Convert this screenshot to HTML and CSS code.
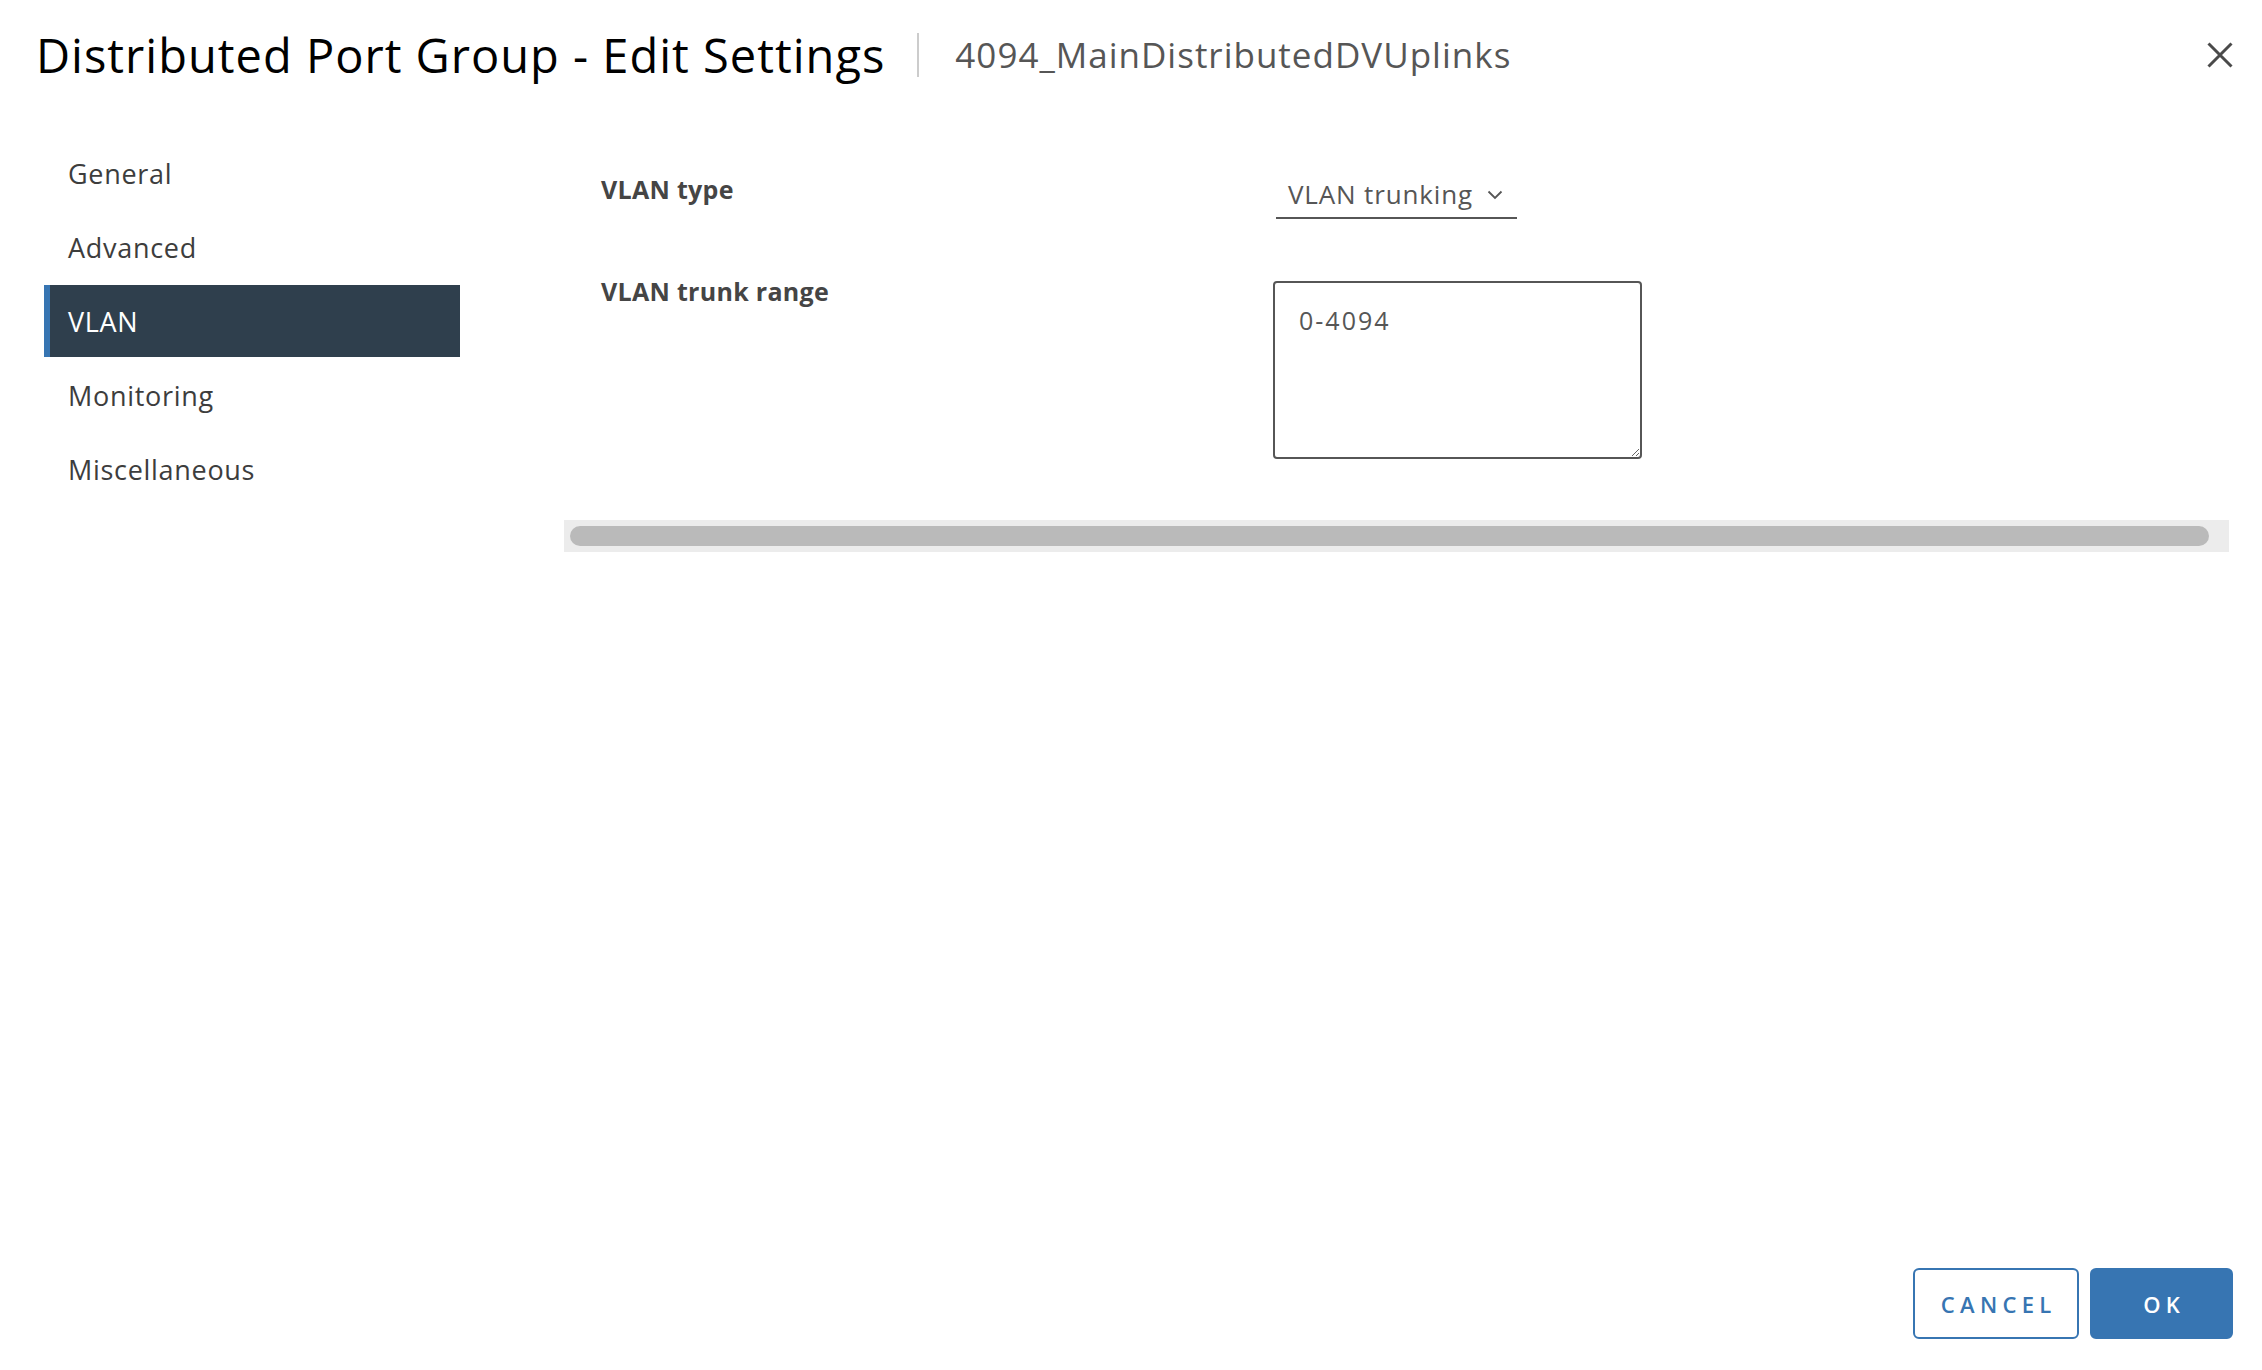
FILE: index.html
```html
<!DOCTYPE html>
<html lang="en">
<head>
<meta charset="utf-8">
<title>Distributed Port Group - Edit Settings</title>
<link rel="stylesheet" href="styles.css">
</head>
<body>
<div class="modal">
  <header class="header">
    <h1 class="title">Distributed Port Group - Edit Settings</h1>
    <span class="divider"></span>
    <span class="subtitle">4094_MainDistributedDVUplinks</span>
    <button class="close" aria-label="Close">
      <svg width="26" height="26" viewBox="0 0 26 26"><path d="M1.5 1.5 L24.5 24.5 M24.5 1.5 L1.5 24.5" stroke="#4a4a4a" stroke-width="3" fill="none"/></svg>
    </button>
  </header>
  <div class="body">
    <nav class="nav">
      <div class="nav-item">General</div>
      <div class="nav-item">Advanced</div>
      <div class="nav-item active">VLAN</div>
      <div class="nav-item">Monitoring</div>
      <div class="nav-item">Miscellaneous</div>
    </nav>
    <main class="content">
      <div class="form">
        <label class="label label-type">VLAN type</label>
        <div class="field">
          <div class="select">
            <span>VLAN trunking</span>
            <svg class="chev" width="16" height="10" viewBox="0 0 16 10"><path d="M1.5 1.5 L8 8 L14.5 1.5" stroke="#565656" stroke-width="1.8" fill="none"/></svg>
          </div>
        </div>
        <label class="label label-range">VLAN trunk range</label>
        <div class="field">
          <textarea class="textarea">0-4094</textarea>
        </div>
      </div>
      <div class="hscroll"><div class="thumb"></div></div>
    </main>
  </div>
  <footer class="footer">
    <button class="btn btn-outline">CANCEL</button>
    <button class="btn btn-primary">OK</button>
  </footer>
</div>
</body>
</html>
```

FILE: styles.css
```css
html, body {
  margin: 0;
  padding: 0;
  background: #ffffff;
}

.modal {
  display: flex;
  flex-direction: column;
  height: 100vh;
  font-family: "Open Sans", Lato, "Liberation Sans", sans-serif;
  color: #454545;
}

.header {
  height: 110px;
  display: flex;
  align-items: center;
  padding: 0 29px 0 36px;
  flex-shrink: 0;
}

.title {
  margin: 0;
  font-size: 47px;
  font-weight: 400;
  letter-spacing: 1px;
  color: #000000;
  line-height: 1.2;
}

.divider {
  width: 2px;
  height: 44px;
  background: #cccccc;
  margin: 0 36px 0 32px;
}

.subtitle {
  font-size: 35px;
  letter-spacing: 1px;
  color: #565656;
  line-height: 1.2;
}

.close {
  margin-left: auto;
  background: none;
  border: 0;
  padding: 0;
  width: 26px;
  height: 26px;
  display: flex;
  cursor: pointer;
}

.body {
  flex: 1;
  display: flex;
}

.nav {
  width: 416px;
  margin-left: 44px;
  padding-top: 27px;
  display: flex;
  flex-direction: column;
  gap: 2px;
}

.nav-item {
  height: 72px;
  display: flex;
  align-items: center;
  padding-left: 24px;
  font-size: 27px;
  letter-spacing: 0.7px;
  color: #3d3d3d;
}

.nav-item.active {
  background: #2f3f4d;
  color: #ffffff;
  border-left: 6px solid #3775b2;
  padding-left: 18px;
}

.content {
  flex: 1;
  margin-left: 104px;
  margin-right: 33px;
  padding-top: 60px;
}

.form {
  display: grid;
  grid-template-columns: 672px auto;
  row-gap: 62px;
  padding-left: 37px;
  align-items: start;
}

.label {
  font-size: 25px;
  font-weight: 700;
  letter-spacing: 0.3px;
  line-height: 30px;
  color: #454545;
}

.label-type {
  margin-top: 4px;
}

.label-range {
  margin-top: -5px;
}

.field {
  display: flex;
}

.select {
  display: inline-flex;
  align-items: center;
  gap: 14px;
  height: 47px;
  padding: 0 14px 0 12px;
  margin-left: 3px;
  border-bottom: 2px solid #565656;
  font-size: 26px;
  letter-spacing: 0.85px;
  color: #565656;
}

.chev {
  margin-top: 2px;
}

.textarea {
  box-sizing: border-box;
  width: 369px;
  height: 178px;
  border: 2px solid #565656;
  border-radius: 4px;
  padding: 22px 24px;
  font-family: "Open Sans", Lato, "Liberation Sans", sans-serif;
  font-size: 25px;
  letter-spacing: 2px;
  line-height: 1.2;
  color: #565656;
  background: #ffffff;
  margin: 0;
}

.hscroll {
  margin-top: 61px;
  height: 32px;
  background: #ececec;
  padding: 6px 20px 6px 6px;
  box-sizing: border-box;
}

.thumb {
  height: 20px;
  background: #bababa;
  border-radius: 10px;
}

.footer {
  display: flex;
  justify-content: flex-end;
  gap: 11px;
  padding: 0 29px 31px 0;
}

.btn {
  box-sizing: border-box;
  height: 71px;
  border-radius: 6px;
  font-family: "Open Sans", Lato, "Liberation Sans", sans-serif;
  font-size: 22px;
  font-weight: 600;
  letter-spacing: 0.24em;
  padding: 0 0 0 0.24em;
  cursor: pointer;
}

.btn-outline {
  width: 166px;
  background: #ffffff;
  border: 2px solid #3775b2;
  color: #3775b2;
}

.btn-primary {
  width: 143px;
  background: #3775b2;
  border: 2px solid #3775b2;
  color: #ffffff;
}
```
